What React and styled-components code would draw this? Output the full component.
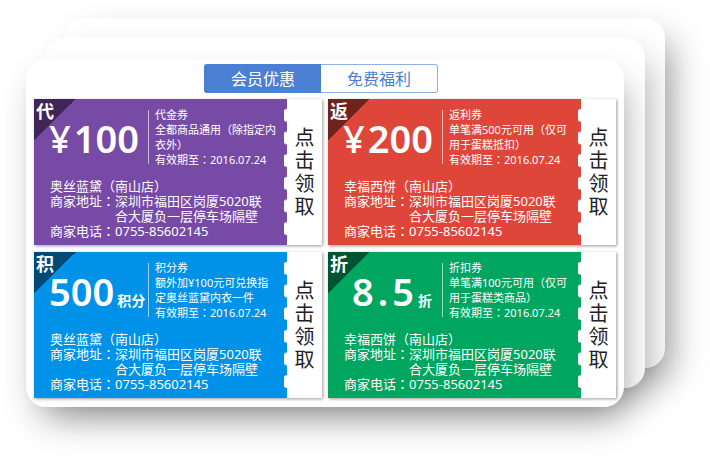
import React, { useState } from "react";
import styled, { createGlobalStyle } from "styled-components";

const GlobalStyle = createGlobalStyle`
  * { box-sizing: border-box; }
  body {
    margin: 0;
    background: #fff;
    font-family: "Noto Sans", "Noto Sans CJK SC", sans-serif;
    overflow-x: hidden;
  }
  button { font-family: inherit; cursor: pointer; }
`;

const Stage = styled.main`
  display: grid;
  padding: 18px 45px 53px 26px;
`;

const Sheet = styled.div`
  grid-area: 1 / 1;
  margin: ${(p) => p.$margin};
  border-radius: 20px;
  background: #fff;
  box-shadow: ${(p) => p.$shadow};
`;

const Panel = styled(Sheet)`
  padding: 5px 8px 9px;
  z-index: 1;
`;

const TabBar = styled.div`
  display: flex;
  justify-content: center;
  padding-right: 8px;
  margin-bottom: 6px;
`;

const Tab = styled.button`
  width: 117px;
  height: 29px;
  padding: 0;
  border: 1px solid;
  font-size: 16px;
  line-height: 24px;
  color: ${(p) => (p.$active ? "#fff" : "#4a7fd3")};
  background: ${(p) => (p.$active ? "#4a7fd3" : "#fff")};
  border-color: ${(p) => (p.$active ? "#4a7fd3" : "#8fb0e5")};
  &:first-child { border-radius: 3px 0 0 3px; border-right: 0; }
  &:last-child { border-radius: 0 3px 3px 0; border-left: 0; }
`;

const Coupons = styled.div`
  display: grid;
  grid-template-columns: 1fr 1fr;
  gap: 7px 6px;
`;

const Ticket = styled.article`
  display: flex;
  background: #fff;
  box-shadow: 1px 1px 3px rgba(0, 0, 0, 0.4);
`;

const Face = styled.div`
  position: relative;
  flex: 1;
  min-width: 0;
  padding: 8px 0 6px;
  color: #fff;
  background: ${(p) => p.$color};
  &::after {
    content: "";
    position: absolute;
    top: 5px;
    bottom: 5px;
    right: 0;
    width: 3px;
    background: radial-gradient(circle at 4px 50%, #fff 6px, transparent 7px) 0 0 / 3px calc(100% / 6);
  }
`;

const Corner = styled.span`
  position: absolute;
  top: 0;
  left: 0;
  width: 42px;
  height: 42px;
  padding-left: 2px;
  font-size: 18px;
  line-height: 24px;
  font-weight: 600;
  background: linear-gradient(135deg, ${(p) => p.$color} 50%, transparent 50%);
`;

const Head = styled.div`
  display: flex;
  height: 60px;
`;

const Price = styled.div`
  position: relative;
  z-index: 1;
  display: flex;
  align-items: baseline;
  gap: ${(p) => (p.$wide ? 4 : 3)}px;
  width: 114px;
  padding-left: ${(p) => (p.$wide ? 24 : 15)}px;
  font-size: 38px;
  line-height: 62px;
  font-weight: 600;
  white-space: nowrap;
`;

const Currency = styled.span`
  font-weight: 500;
`;

const Unit = styled.span`
  font-size: 14px;
  font-weight: 600;
`;

const Terms = styled.div`
  position: relative;
  flex: 1;
  padding-left: 7px;
  font-size: 11px;
  line-height: 15px;
  white-space: nowrap;
  &::before {
    content: "";
    position: absolute;
    left: 0;
    top: 3px;
    bottom: 3px;
    width: 1px;
    background: rgba(255, 255, 255, 0.6);
  }
`;

const Shop = styled.div`
  margin-top: 12px;
  padding-left: 16px;
  font-size: 13px;
  line-height: 15px;
  white-space: nowrap;
`;

const Field = styled.div`
  display: flex;
`;

const Colon = styled.span`
  font-family: "Noto Sans CJK TC", sans-serif;
  line-height: 0;
`;

const Claim = styled.button`
  display: flex;
  align-items: center;
  justify-content: center;
  width: 35px;
  padding: 0;
  border: 0;
  background: #fff;
  color: #222;
  font-size: 20px;
  line-height: 23px;
`;

const Stacked = styled.span`
  width: 20px;
  word-break: break-all;
`;

const coupons = [
  {
    tag: "代", color: "#774aa5", dark: "#3f2657", currency: "¥", price: ["100"],
    terms: ["代金券", "全都商品通用（除指定内", "衣外）"], shop: "奥丝蓝黛（南山店）",
  },
  {
    tag: "返", color: "#df463a", dark: "#6e231d", currency: "¥", price: ["200"],
    terms: ["返利券", "单笔满500元可用（仅可", "用于蛋糕抵扣）"], shop: "幸福西饼（南山店）",
  },
  {
    tag: "积", color: "#0092e9", dark: "#004a75", price: ["500"], unit: "积分",
    terms: ["积分券", "额外加¥100元可兑换指", "定奥丝蓝黛内衣一件"], shop: "奥丝蓝黛（南山店）",
  },
  {
    tag: "折", color: "#00a660", dark: "#005431", price: ["8", ".", "5"], unit: "折", wide: true,
    terms: ["折扣券", "单笔满100元可用（仅可", "用于蛋糕类商品）"], shop: "幸福西饼（南山店）",
  },
];

function Coupon({ data }) {
  return (
    <Ticket>
      <Face $color={data.color}>
        <Corner $color={data.dark}>{data.tag}</Corner>
        <Head>
          <Price $wide={data.wide}>
            {data.currency && <Currency>{data.currency}</Currency>}
            {data.price.map((part) => <span key={part}>{part}</span>)}
            {data.unit && <Unit>{data.unit}</Unit>}
          </Price>
          <Terms>
            {data.terms.map((t) => <React.Fragment key={t}>{t}<br /></React.Fragment>)}
            有效期至<Colon>：</Colon>2016.07.24
          </Terms>
        </Head>
        <Shop>
          <div>{data.shop}</div>
          <Field>
            <span>商家地址<Colon>：</Colon></span>
            <span>深圳市福田区岗厦5020联<br />合大厦负一层停车场隔壁</span>
          </Field>
          <Field>
            <span>商家电话<Colon>：</Colon></span>
            <span>0755-85602145</span>
          </Field>
        </Shop>
      </Face>
      <Claim type="button"><Stacked>点击领取</Stacked></Claim>
    </Ticket>
  );
}

export default function App() {
  const [active, setActive] = useState(0);
  return (
    <>
      <GlobalStyle />
      <Stage>
        <Sheet $margin="0 0 39px 39px" $shadow="12px 16px 36px -6px rgba(0, 0, 0, 0.36)" />
        <Sheet $margin="20px 20px 19px 19px" $shadow="10px 16px 36px -6px rgba(0, 0, 0, 0.28)" />
        <Panel $margin="41px 41px 0 0" $shadow="6px 18px 36px -8px rgba(0, 0, 0, 0.4)">
          <TabBar>
            {["会员优惠", "免费福利"].map((label, i) => (
              <Tab key={label} type="button" $active={i === active} aria-pressed={i === active} onClick={() => setActive(i)}>
                {label}
              </Tab>
            ))}
          </TabBar>
          <Coupons>
            {coupons.map((c) => <Coupon key={c.tag} data={c} />)}
          </Coupons>
        </Panel>
      </Stage>
    </>
  );
}
